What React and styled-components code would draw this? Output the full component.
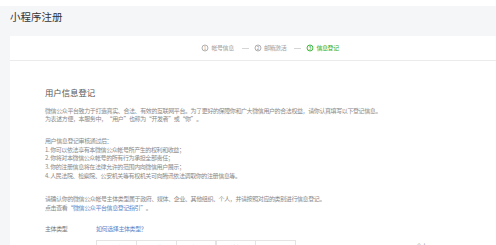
import React from "react";
import styled, { createGlobalStyle } from "styled-components";

const Global = createGlobalStyle`
  html, body { margin: 0; padding: 0; background: #fff; }
  body { font-family: "Noto Sans CJK SC", "Noto Sans", sans-serif; -webkit-font-smoothing: antialiased; }
  #root { width: 496px; height: 245px; overflow: hidden; }
`;

const Page = styled.div`
  margin-top: 6px;
  background: #f5f6f8;
  padding-left: 10px;
  min-height: 239px;
`;

const Header = styled.div`
  height: 30px;
  box-sizing: border-box;
  padding-top: 4px;
  font-size: 10.5px;
  line-height: 14px;
  color: #353535;
`;

const Card = styled.div`
  background: #fff;
  min-height: 209px;
`;

const Stepper = styled.div`
  height: 24px;
  border-bottom: 1px solid #ebebee;
  display: flex;
  align-items: center;
  padding-left: 191px;
  font-size: 6px;
  letter-spacing: -0.45px;
  line-height: 8px;
`;

const Step = styled.div`
  display: flex;
  align-items: center;
  gap: 2.5px;
  color: ${(p) => (p.$active ? "#1aad19" : "#a0a0a0")};
`;

const StepLabel = styled.span`
  width: 22.5px;
  white-space: nowrap;
`;

const Circle = styled.span`
  flex: none;
  width: 6px;
  height: 6px;
  border: 0.7px solid currentColor;
  border-radius: 50%;
  display: inline-flex;
  align-items: center;
  justify-content: center;
  font-size: 6px;
  letter-spacing: 0;
  line-height: 1;
  transform: scale(0.85);
`;

const Dash = styled.span`
  flex: none;
  width: 7px;
  height: 0.7px;
  background: #d5d5d5;
  margin: 0 5px 0 7.5px;
`;

const Content = styled.div`
  padding-left: 35px;
  padding-top: 25px;
  color: #888;
`;

const Heading = styled.div`
  font-size: 8.4px;
  line-height: 12px;
  color: #555;
`;

const Para = styled.div`
  font-size: 6px;
  letter-spacing: -0.4px;
  line-height: 8.7px;
  margin-top: ${(p) => p.$mt || 0}px;
  white-space: nowrap;
`;

const Link = styled.a`
  color: #5b86c9;
  text-decoration: none;
`;

const FormRow = styled.div`
  display: flex;
  margin-top: 13px;
  font-size: 6px;
  letter-spacing: -0.4px;
  line-height: 8.7px;
`;

const Label = styled.div`
  width: 51px;
  color: #777;
`;

const Field = styled.div`
  display: flex;
  flex-direction: column;
  gap: 6px;
`;

const Options = styled.div`
  display: flex;
  align-items: flex-start;
  margin-left: 1px;
`;

const Option = styled.div`
  width: 40.6px;
  height: 16px;
  box-sizing: border-box;
  border: 0.8px solid #e4e4e4;
  margin-left: -0.8px;
  display: flex;
  align-items: center;
  justify-content: center;
  color: #777;
`;

const Hint = styled.div`
  margin-left: 120px;
  margin-top: 1.5px;
  color: #aaa;
`;

export default function App() {
  return (
    <>
      <Global />
      <Page>
        <Header>小程序注册</Header>
        <Card>
          <Stepper>
            <Step><Circle>1</Circle><StepLabel>帐号信息</StepLabel></Step>
            <Dash />
            <Step><Circle>2</Circle><StepLabel>邮箱激活</StepLabel></Step>
            <Dash />
            <Step $active><Circle>3</Circle><StepLabel>信息登记</StepLabel></Step>
          </Stepper>
          <Content>
            <Heading>用户信息登记</Heading>
            <Para $mt={8.5}>
              微信公众平台致力于打造真实、合法、有效的互联网平台。为了更好的保障你和广大微信用户的合法权益，请你认真填写以下登记信息。
              <br />
              为表述方便，本服务中，“用户”也称为“开发者”或“你”。
            </Para>
            <Para $mt={13}>
              用户信息登记审核通过后：
              <br />
              1. 你可以依法享有本微信公众帐号所产生的权利和收益；
              <br />
              2. 你将对本微信公众帐号的所有行为承担全部责任；
              <br />
              3. 你的注册信息将在法律允许的范围内向微信用户展示；
              <br />
              4. 人民法院、检察院、公安机关等有权机关可向腾讯依法调取你的注册信息等。
            </Para>
            <Para $mt={14.5}>
              请确认你的微信公众帐号主体类型属于政府、媒体、企业、其他组织、个人，并请按照对应的类别进行信息登记。
              <br />
              点击查看<Link href="#">“微信公众平台信息登记指引”</Link>。
            </Para>
            <FormRow>
              <Label>主体类型</Label>
              <Field>
                <Link href="#">如何选择主体类型？</Link>
                <Options>
                  <Option>政府</Option>
                  <Option>媒体</Option>
                  <Option>企业</Option>
                  <Option>其他组织</Option>
                  <Option>个人</Option>
                  <Hint>个人</Hint>
                </Options>
              </Field>
            </FormRow>
          </Content>
        </Card>
      </Page>
    </>
  );
}
